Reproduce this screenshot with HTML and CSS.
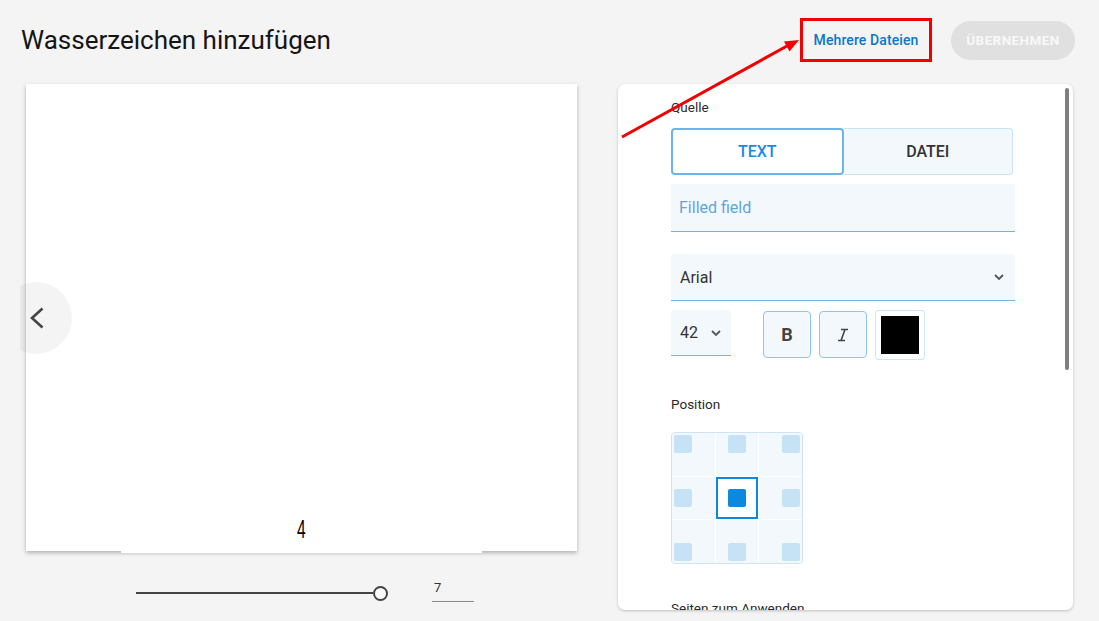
FILE: index.html
```html
<!DOCTYPE html>
<html lang="de">
<head>
    <meta charset="UTF-8">
    <title>Wasserzeichen hinzufügen</title>
    <link rel="stylesheet" href="styles.css">
</head>
<body>
    <div class="app">
        <div class="header">
            <h1 class="title">Wasserzeichen hinzufügen</h1>
            <div class="actions">
                <a class="multi_files">Mehrere Dateien</a>
                <button class="btn_apply" disabled>Übernehmen</button>
            </div>
        </div>

        <div class="main">
            <div class="preview_column">
                <div class="page_card">
                    <div class="page_footer"><span class="page_number">4</span></div>
                </div>

                <button class="nav_prev">
                    <svg width="24" height="24" viewBox="0 0 24 24"><path d="M16.5 2.5 L6 12 L16.5 21.5" fill="none" stroke="#444" stroke-width="2.6"/></svg>
                </button>

                <div class="slider_row">
                    <div class="slider">
                        <div class="track"></div>
                        <div class="thumb"></div>
                    </div>
                    <div class="page_input">7</div>
                </div>
            </div>

            <div class="settings_panel">
                <div class="scroll_thumb"></div>

                <div class="label">Quelle</div>
                <div class="toggle">
                    <div class="toggle_option active">TEXT</div>
                    <div class="toggle_option">DATEI</div>
                </div>

                <div class="filled_field">Filled field</div>

                <div class="select font_select">
                    <span>Arial</span>
                    <svg class="chevron" width="12" height="8" viewBox="0 0 12 8"><path d="M2 2 L6 6 L10 2" fill="none" stroke="#555" stroke-width="1.8"/></svg>
                </div>

                <div class="style_row">
                    <div class="select size_select">
                        <span>42</span>
                        <svg class="chevron" width="12" height="8" viewBox="0 0 12 8"><path d="M2 2 L6 6 L10 2" fill="none" stroke="#555" stroke-width="1.8"/></svg>
                    </div>
                    <div class="style_btn bold_btn">B</div>
                    <div class="style_btn">
                        <svg width="18" height="18" viewBox="0 0 18 18"><path d="M7 3.5 H14 M4 14.5 H11 M11 3.5 L7 14.5" fill="none" stroke="#444" stroke-width="1.6"/></svg>
                    </div>
                    <div class="color_btn"><div class="swatch"></div></div>
                </div>

                <div class="label label_position">Position</div>
                <div class="position_grid">
                    <div class="cell top left"><span class="dot"></span></div>
                    <div class="cell top center"><span class="dot"></span></div>
                    <div class="cell top right"><span class="dot"></span></div>
                    <div class="cell middle left"><span class="dot"></span></div>
                    <div class="cell middle center selected"><span class="dot"></span></div>
                    <div class="cell middle right"><span class="dot"></span></div>
                    <div class="cell bottom left"><span class="dot"></span></div>
                    <div class="cell bottom center"><span class="dot"></span></div>
                    <div class="cell bottom right"><span class="dot"></span></div>
                </div>

                <div class="label label_pages">Seiten zum Anwenden</div>
            </div>
        </div>

        <svg class="annotation" width="1099" height="621" viewBox="0 0 1099 621">
            <line x1="622" y1="137" x2="787" y2="46" stroke="#f20000" stroke-width="3"/>
            <polygon points="799,40 789.5,51.5 784,41.5" fill="#f20000"/>
        </svg>
    </div>
</body>
</html>
```

FILE: styles.css
```css
body {
    margin: 0;
    background: #f4f4f4;
    font-family: Roboto, "Noto Sans", sans-serif;
    color: #333;
}

.app {
    position: relative;
    width: 1099px;
    height: 621px;
    overflow: hidden;
}

.header {
    height: 80px;
    display: flex;
    align-items: center;
    justify-content: space-between;
    padding: 0 24px 0 21px;
}

.title {
    margin: 0;
    font-size: 26px;
    font-weight: 400;
    color: #151515;
}

.actions {
    display: flex;
    align-items: center;
    gap: 19px;
}

.multi_files {
    width: 132px;
    height: 44px;
    box-sizing: border-box;
    display: flex;
    align-items: center;
    justify-content: center;
    border: 3px solid #f20000;
    color: #0b78c5;
    font-size: 14px;
    font-weight: 500;
    letter-spacing: 0.1px;
}

.btn_apply {
    width: 124px;
    height: 39px;
    border: none;
    border-radius: 20px;
    background: #e0e0e0;
    color: #f8f8f8;
    font-family: Roboto, sans-serif;
    font-size: 13.5px;
    font-weight: 700;
    text-transform: uppercase;
    letter-spacing: 0.4px;
}

.main {
    display: flex;
    gap: 41px;
    padding: 4px 26px 0 26px;
}

/* left: page preview */
.preview_column {
    position: relative;
    width: 551px;
}

.page_card {
    height: 467px;
    background: #fff;
    box-shadow: 0 2px 4px rgba(0, 0, 0, 0.28);
    display: flex;
    flex-direction: column;
    justify-content: flex-end;
}

.page_footer {
    width: 361px;
    height: 42px;
    margin: 0 auto -2px;
    background: #fff;
    display: flex;
    justify-content: center;
    align-items: flex-start;
}

.page_number {
    display: inline-block;
    font-family: "Liberation Sans", sans-serif;
    font-weight: 400;
    font-size: 26px;
    line-height: 30px;
    color: #000;
    transform: scaleX(0.6);
    margin-top: 3px;
}

.nav_prev {
    position: absolute;
    left: -26px;
    top: 198px;
    width: 72px;
    height: 72px;
    border: none;
    border-radius: 50%;
    background: rgba(0, 0, 0, 0.045);
    clip-path: inset(0 0 0 20px);
    display: flex;
    align-items: center;
    justify-content: center;
    padding: 0 0 0 4px;
}

.slider_row {
    display: flex;
    align-items: center;
    height: 30px;
    margin-top: 27px;
    padding-left: 110px;
    gap: 44px;
}

.slider {
    width: 252px;
    display: flex;
    align-items: center;
}

.track {
    flex: 1;
    height: 2px;
    background: #444;
}

.thumb {
    width: 11px;
    height: 11px;
    border: 2px solid #444;
    border-radius: 50%;
    background: #fafafa;
}

.page_input {
    width: 40px;
    height: 22px;
    margin-bottom: 5px;
    padding-left: 2px;
    border-bottom: 1px solid #8a8a8a;
    font-size: 13px;
    line-height: 18px;
    color: #333;
}

/* right: settings */
.settings_panel {
    position: relative;
    width: 455px;
    height: 526px;
    box-sizing: border-box;
    padding: 13px 58px 0 53px;
    background: #fff;
    border-radius: 7px;
    box-shadow: 0 1px 3px rgba(0, 0, 0, 0.22);
    overflow: hidden;
}

.scroll_thumb {
    position: absolute;
    right: 4px;
    top: 4px;
    width: 4px;
    height: 282px;
    border-radius: 2px;
    background: #7f7f7f;
}

.label {
    height: 20px;
    line-height: 20px;
    font-size: 13.5px;
    font-weight: 400;
    color: #2a2a2a;
}

.toggle {
    display: flex;
    width: 342px;
    height: 47px;
    margin-top: 11px;
}

.toggle_option {
    flex: 1;
    display: flex;
    align-items: center;
    justify-content: center;
    font-size: 16px;
    font-weight: 500;
    color: #333;
    background: #f3f8fd;
    border: 1px solid #c8e2f7;
    border-left: none;
    border-radius: 0 4px 4px 0;
}

.toggle_option.active {
    color: #1a8ae3;
    background: #fff;
    border: 2px solid #6cb5ec;
    border-radius: 4px;
}

.filled_field {
    height: 47px;
    margin-top: 9px;
    padding-left: 8px;
    display: flex;
    align-items: center;
    background: #f3f8fc;
    border-bottom: 1px solid #6fb2e5;
    font-size: 16px;
    color: #5fa6dc;
}

.select {
    display: flex;
    align-items: center;
    justify-content: space-between;
    height: 46px;
    padding: 0 10px 0 9px;
    background: #f3f8fc;
    border-radius: 4px 4px 0 0;
    border-bottom: 1px solid #76b4e2;
    font-size: 16px;
    color: #333;
}

.font_select {
    margin-top: 22px;
}

.style_row {
    display: flex;
    align-items: flex-start;
    margin-top: 9px;
}

.size_select {
    width: 60px;
    box-sizing: border-box;
    padding-right: 9px;
}

.style_btn {
    width: 46px;
    height: 45px;
    margin-left: 8px;
    display: flex;
    align-items: center;
    justify-content: center;
    background: #f3f8fc;
    border: 1px solid #8fc6ef;
    border-radius: 4px;
    margin-top: 1px;
}

.bold_btn {
    margin-left: 32px;
    font-size: 18px;
    font-weight: 700;
    color: #444;
}

.color_btn {
    width: 38px;
    height: 38px;
    margin-left: 8px;
    padding: 5px;
    border: 1px solid #cfe6f8;
    border-radius: 3px;
}

.swatch {
    width: 38px;
    height: 38px;
    background: #000;
}

.label_position {
    margin-top: 34px;
}

.position_grid {
    width: 130px;
    height: 130px;
    margin-top: 18px;
    display: grid;
    grid-template-columns: repeat(3, 1fr);
    grid-template-rows: repeat(3, 1fr);
    gap: 1px;
    background: #fff;
    border: 1px solid #cde4f6;
    border-radius: 4px;
    overflow: hidden;
}

.cell {
    display: flex;
    background: #f3f8fc;
    padding: 2px;
}

.cell.top { align-items: flex-start; }
.cell.middle { align-items: center; }
.cell.bottom { align-items: flex-end; }
.cell.left { justify-content: flex-start; }
.cell.center { justify-content: center; }
.cell.right { justify-content: flex-end; }

.dot {
    width: 18px;
    height: 18px;
    border-radius: 2px;
    background: #c6e3f6;
}

.cell.selected {
    background: #fff;
    border: 2px solid #0a89df;
    padding: 0;
}

.cell.selected .dot {
    background: #0a89df;
}

.label_pages {
    margin-top: 34px;
}

.annotation {
    position: absolute;
    left: 0;
    top: 0;
    pointer-events: none;
}
```
